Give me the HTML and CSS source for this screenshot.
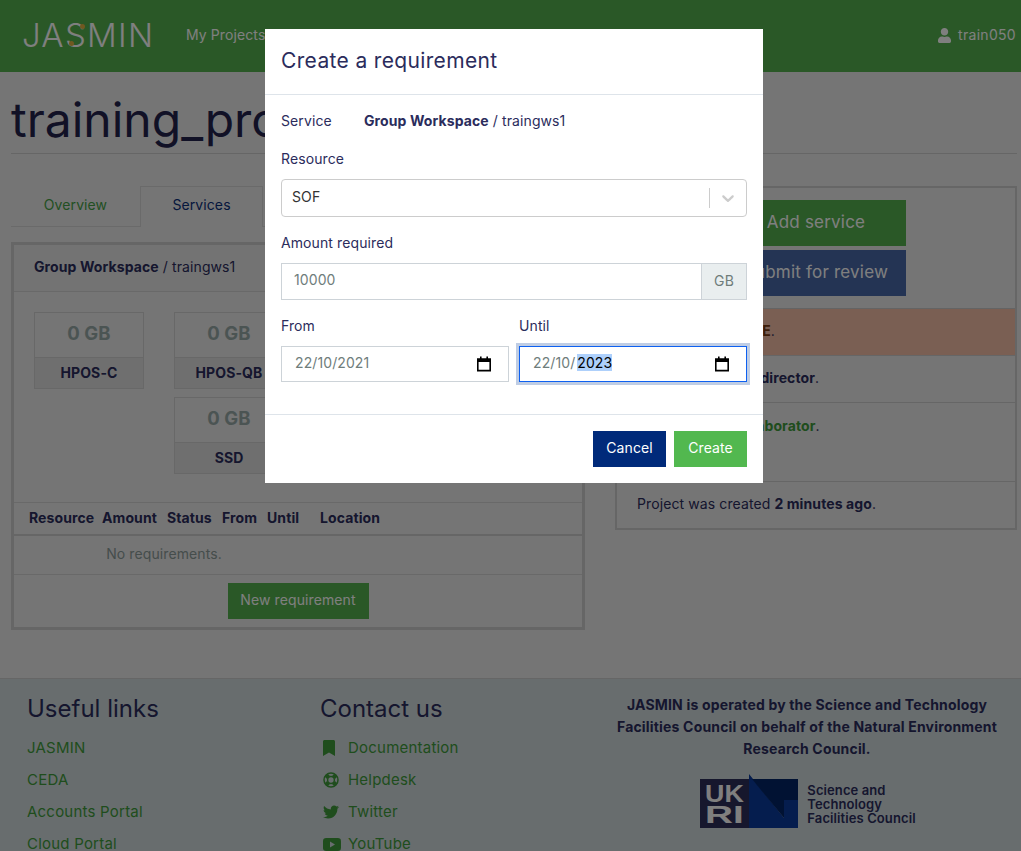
FILE: index.html
```html
<!DOCTYPE html>
<html lang="en">
<head>
<meta charset="utf-8">
<title>Create a requirement</title>
<link rel="stylesheet" href="styles.css">
</head>
<body>
<nav class="nav">
  <a class="logo">JASMIN<i class="dot dot-a"></i><i class="dot dot-b"></i></a>
  <a class="nav-link">My Projects</a>
  <a class="nav-user">
    <svg class="user-icon" viewBox="0 0 448 512"><path fill="currentColor" d="M224 256c70.7 0 128-57.3 128-128S294.7 0 224 0 96 57.3 96 128s57.3 128 128 128zm89.6 32h-16.7c-22.2 10.2-46.9 16-72.9 16s-50.6-5.8-72.9-16h-16.7C60.2 288 0 348.2 0 422.4V464c0 26.5 21.5 48 48 48h352c26.5 0 48-21.5 48-48v-41.6c0-74.2-60.2-134.4-134.4-134.4z"/></svg>
    train050
  </a>
</nav>
<main class="main">
  <h1 class="title">training_project</h1>
  <div class="columns">
    <section>
      <div class="tabs">
        <a class="tab">Overview</a>
        <a class="tab tab-active">Services</a>
      </div>
      <div class="card service">
        <div class="card-header"><b>Group Workspace</b> / traingws1</div>
        <div class="quotas">
          <div class="quota"><div class="quota-val">0 GB</div><div class="quota-name">HPOS-C</div></div>
          <div class="quota"><div class="quota-val">0 GB</div><div class="quota-name">HPOS-QB</div></div>
          <div class="quota quota-ssd"><div class="quota-val">0 GB</div><div class="quota-name">SSD</div></div>
        </div>
        <div class="req-head">
          <span>Resource</span><span>Amount</span><span>Status</span><span>From</span><span>Until</span><span>Location</span>
        </div>
        <div class="req-empty"><span>No requirements.</span></div>
        <div class="req-foot"><a class="btn btn-dim-green">New requirement</a></div>
      </div>
    </section>
    <aside class="card side">
      <div class="actions">
        <a class="action action-green">Add service</a>
        <a class="action action-blue">Submit for review</a>
      </div>
      <div class="status status-warn">Project is <b>EDITABLE</b>.</div>
      <div class="status">You're the project <b>director</b>.</div>
      <div class="status status-tall">train user is a <b class="green">collaborator</b>.</div>
      <div class="status">Project was created <b>2 minutes ago</b>.</div>
    </aside>
  </div>
</main>
<footer class="footer">
  <div class="foot-col">
    <h3 class="foot-title">Useful links</h3>
    <a class="foot-link">JASMIN</a>
    <a class="foot-link">CEDA</a>
    <a class="foot-link">Accounts Portal</a>
    <a class="foot-link">Cloud Portal</a>
  </div>
  <div class="foot-col">
    <h3 class="foot-title">Contact us</h3>
    <a class="foot-link"><span class="ico"><svg viewBox="0 0 384 512" width="12" height="16"><path fill="currentColor" d="M0 512V48C0 21.49 21.49 0 48 0h288c26.51 0 48 21.49 48 48v464L192 400 0 512z"/></svg></span>Documentation</a>
    <a class="foot-link"><span class="ico"><svg viewBox="0 0 16 16" width="16" height="16"><g fill="none" stroke="currentColor"><circle cx="8" cy="8" r="7" stroke-width="1.5"/><circle cx="8" cy="8" r="3.4" stroke-width="1.5"/><path stroke-width="4.2" d="M5.5 5.5L3 3M10.5 5.5L13 3M5.5 10.5L3 13M10.5 10.5L13 13"/></g></svg></span>Helpdesk</a>
    <a class="foot-link"><span class="ico"><svg viewBox="0 0 512 512" width="16" height="16"><path fill="currentColor" d="M459.37 151.716c.325 4.548.325 9.097.325 13.645 0 138.72-105.583 298.558-298.558 298.558-59.452 0-114.68-17.219-161.137-47.106 8.447.974 16.568 1.299 25.34 1.299 49.055 0 94.213-16.568 130.274-44.832-46.132-.975-84.792-31.188-98.112-72.772 6.498.974 12.995 1.624 19.818 1.624 9.421 0 18.843-1.3 27.614-3.573-48.081-9.747-84.143-51.98-84.143-102.985v-1.299c13.969 7.797 30.214 12.67 47.431 13.319-28.264-18.843-46.781-51.005-46.781-87.391 0-19.492 5.197-37.36 14.294-52.954 51.655 63.675 129.3 105.258 216.365 109.807-1.624-7.797-2.599-15.918-2.599-24.04 0-57.828 46.782-104.934 104.934-104.934 30.213 0 57.502 12.67 76.67 33.137 23.715-4.548 46.456-13.32 66.599-25.34-7.798 24.366-24.366 44.833-46.132 57.827 21.117-2.273 41.584-8.122 60.426-16.243-14.292 20.791-32.161 39.308-52.628 54.253z"/></svg></span>Twitter</a>
    <a class="foot-link"><span class="ico"><svg viewBox="0 0 18 13" width="18" height="13"><rect width="18" height="13" rx="3.2" fill="currentColor"/><path fill="#d0dadc" d="M7 3.6v5.8l5-2.9z"/></svg></span>YouTube</a>
  </div>
  <div class="foot-about">
    <p class="about-text">JASMIN is operated by the Science and Technology Facilities Council on behalf of the Natural Environment Research Council.</p>
    <div class="ukri">
      <svg class="ukri-mark" viewBox="0 0 98 54" width="98" height="54">
        <rect x="0" y="5" width="49" height="49" fill="#2d2f5a"/>
        <polygon points="49,0 84,44 84,26 98,26 98,54 49,54" fill="#0a3a9c"/>
        <polygon points="52,5 98,5 98,26 84,26 84,44" fill="#032566"/>
        <text class="ukri-letters" x="5" y="28" textLength="39" lengthAdjust="spacingAndGlyphs">UK</text>
        <text class="ukri-letters" x="5" y="49" textLength="39" lengthAdjust="spacingAndGlyphs">RI</text>
      </svg>
      <div class="ukri-name">Science and<br>Technology<br>Facilities Council</div>
    </div>
  </div>
</footer>

<div class="backdrop"></div>
<div class="modal">
  <div class="modal-head">Create a requirement</div>
  <div class="modal-body">
    <div class="service-row"><span class="service-label">Service</span><span><b>Group Workspace</b> / traingws1</span></div>
    <div class="field-label">Resource</div>
    <div class="select">
      <span class="select-val">SOF</span>
      <span class="select-sep"></span>
      <svg class="chev" viewBox="0 0 20 20"><path fill="currentColor" d="M4.516 7.548c0.436-0.446 1.043-0.481 1.576 0l3.908 3.747 3.908-3.747c0.533-0.481 1.141-0.446 1.574 0 0.436 0.445 0.408 1.197 0 1.615-0.406 0.418-4.695 4.502-4.695 4.502-0.217 0.223-0.502 0.335-0.787 0.335s-0.57-0.112-0.789-0.335c0 0-4.287-4.084-4.695-4.502s-0.436-1.17 0-1.615z"/></svg>
    </div>
    <div class="field-label amount-label">Amount required</div>
    <div class="input-group"><span class="input-val">10000</span><span class="addon">GB</span></div>
    <div class="dates">
      <div>
        <div class="field-label">From</div>
        <div class="date">
          <span>22/10/2021</span>
          <svg class="cal" viewBox="0 0 14 16"><path fill="none" stroke="#000" stroke-width="1.6" d="M.8 3.2h12.4v11.4H.8z"/><path fill="#000" d="M0 2.5h14v3.4H0zM3 .6h1.6v3H3zM9.4.6H11v3H9.4z"/></svg>
        </div>
      </div>
      <div>
        <div class="field-label">Until</div>
        <div class="date date-focus">
          <span>22/10/<span class="sel">2023</span></span>
          <svg class="cal" viewBox="0 0 14 16"><path fill="none" stroke="#000" stroke-width="1.6" d="M.8 3.2h12.4v11.4H.8z"/><path fill="#000" d="M0 2.5h14v3.4H0zM3 .6h1.6v3H3zM9.4.6H11v3H9.4z"/></svg>
        </div>
      </div>
    </div>
  </div>
  <div class="modal-foot">
    <a class="btn btn-navy">Cancel</a>
    <a class="btn btn-green">Create</a>
  </div>
</div>
</body>
</html>
```
FILE: styles.css
```css
* { box-sizing: border-box; }
html, body { margin: 0; height: 851px; overflow: hidden; }
body {
  background: #eaeaea;
  color: #2b2c5c;
  font-family: "Inter", "Noto Sans", sans-serif;
  font-size: 14px;
  letter-spacing: .1px;
  line-height: 20px;
}
b { font-weight: 700; }
.green { color: #3f9a3a; }

/* nav */
.nav { height: 72px; background: #55b04e; display: flex; align-items: center; padding: 0 5px 2px 22px; color: #fff; }
.logo { position: relative; font-size: 33px; font-weight: 300; letter-spacing: 1.3px; width: 164px; color: #fff; line-height: 40px; }
.dot { position: absolute; width: 5px; height: 5px; border-radius: 50%; background: #e0b040; }
.dot-a { left: 58px; top: 9px; }
.dot-b { left: 47px; top: 26px; }
.nav-link { color: #fff; }
.nav-user { margin-left: auto; display: flex; align-items: center; gap: 7px; color: #fff; letter-spacing: .3px; }
.user-icon { width: 13px; height: 15px; }

/* page */
.main { padding: 0 4px 0 11px; height: 606px; }
.title { margin: 0; padding: 24px 0 9px; font-size: 48px; line-height: 48px; font-weight: 400; letter-spacing: 0; color: #22234c; border-bottom: 1px solid #ccc; height: 82px; }
.columns { display: grid; grid-template-columns: 574px 402px; column-gap: 30px; padding-top: 32px; }
.tabs { display: flex; height: 41px; border-bottom: 1px solid #d5d5d5; margin-bottom: 15px; }
.tab { height: 41px; padding: 9px 0 0; text-align: center; }
.tab:first-child { width: 129px; color: #45a045; }
.tab-active { width: 123px; background: #eaeaea; border: 1px solid #d5d5d5; border-bottom: 0; padding-top: 8px; color: #0a2f7a; }

.card { border: 3px solid #ccc; }
.service { height: 388px; }
.card-header { height: 47px; padding: 12px 20px 0; border-bottom: 1px solid #d2d2d2; background: #e6e6e6; }
.quotas { display: grid; grid-template-columns: 110px 110px; align-content: start; column-gap: 30px; row-gap: 8px; padding: 20px 20px 0; height: 210px; }
.quota { border: 1px solid #d0d0d0; height: 77px; text-align: center; }
.quota-ssd { grid-column: 2; }
.quota-val { height: 45px; font-size: 18.5px; font-weight: 700; line-height: 41px; color: #97a9a6; border-bottom: 1px solid #d0d0d0; }
.quota-name { height: 30px; background: #dedede; font-weight: 700; line-height: 30px; color: #2b2c5c; }
.req-head { display: grid; grid-template-columns: 73px 65px 55px 45px 53px 100px; padding: 0 15px 2px; height: 34px; align-items: center; border-top: 1px solid #d2d2d2; border-bottom: 2px solid #ccc; font-weight: 700; }
.req-empty { height: 39px; width: 100%; border-bottom: 1px solid #d2d2d2; line-height: 35px; color: #8a9a98; }
.req-empty span { display: block; width: 300px; text-align: center; }
.req-foot { padding-top: 8px; text-align: center; }
.btn { display: inline-block; height: 36px; line-height: 34px; padding: 0 13px; color: #fff; }
.btn-dim-green { background: #55b04e; width: 141px; padding: 0; }

.side { height: 344px; padding-top: 12px; border-width: 2px; }
.actions { display: flex; flex-direction: column; align-items: flex-end; gap: 4px; padding: 0 109px 11px 0; height: 109px; border-bottom: 1px solid #c8c8c8; }
.action { width: 180px; height: 46px; font-size: 17px; letter-spacing: .2px; line-height: 45px; text-align: center; color: #fff; }
.action-green { background: #55b04e; }
.action-blue { background: #4868a8; }
.status { height: 47px; padding: 12px 20px 0; border-bottom: 1px solid #ccc; }
.status-warn { background: #f4bea6; }
.status-warn b { color: #7a3a10; }
.status-tall { height: 79px; padding-top: 13px; }
.status:last-child { border-bottom: 0; }

/* footer */
.footer { height: 173px; background: #d0dadc; border-top: 1px solid #ccc; display: grid; grid-template-columns: 293px 287px 400px; padding: 15px 0 0 27px; }
.foot-title { margin: 0 0 8px; font-size: 24px; line-height: 30px; font-weight: 400; letter-spacing: 0; color: #2b2c5c; }
.foot-link { display: flex; align-items: center; height: 32px; font-size: 15px; letter-spacing: .22px; color: #3f9a3a; }
.ico { width: 28px; display: flex; align-items: center; padding-left: 3px; }
.foot-about { text-align: center; }
.about-text { margin: 0 0 14px; font-weight: 700; letter-spacing: .18px; line-height: 22px; }
.ukri { display: flex; justify-content: center; gap: 9px; padding-left: 2px; }
.ukri-letters { font-family: "Liberation Sans", sans-serif; font-weight: 700; font-size: 24px; fill: #fff; }
.ukri-name { padding-top: 9px; font-size: 13px; line-height: 14px; font-weight: 600; text-align: left; }

/* modal */
.backdrop { position: fixed; inset: 0; background: rgba(0, 0, 0, .5); }
.modal { position: absolute; left: 265px; top: 29px; width: 498px; height: 454px; background: #fff; }
.modal-head { height: 66px; padding: 19px 16px 0; font-size: 21px; letter-spacing: .35px; line-height: 25px; border-bottom: 1px solid #dee4ea; }
.modal-body { height: 319px; padding: 16px 16px 0; }
.service-row { display: flex; height: 20px; }
.service-label { width: 83px; }
.field-label { height: 20px; line-height: 20px; }
.service-row + .field-label { margin-top: 18px; }
.select { display: flex; align-items: center; height: 38px; margin-top: 10px; border: 1px solid #ccc; border-radius: 4px; padding-left: 10px; color: #333; }
.select-val { flex: 1; padding-bottom: 2px; }
.select-sep { width: 1px; height: 20px; background: #ccc; }
.chev { width: 20px; height: 20px; margin: 0 8px; color: #ccc; }
.amount-label { margin-top: 16px; }
.input-group { display: flex; height: 37px; margin-top: 10px; border: 1px solid #cdd3d8; color: #6f7d7b; }
.input-val { flex: 1; padding: 6px 12px; }
.addon { width: 45px; background: #e9eeef; border-left: 1px solid #cdd3d8; text-align: center; line-height: 33px; }
.dates { display: grid; grid-template-columns: 228px 228px; column-gap: 10px; margin-top: 16px; }
.date { display: flex; align-items: center; justify-content: space-between; height: 36px; margin-top: 10px; padding: 0 17px 2px 13px; border: 1px solid #cdd3d8; color: #6f7d7b; }
.date-focus { border-color: #0d60f0; box-shadow: 0 0 0 3px #bfcde4; }
.sel { background: #aed0fb; color: #000; margin-left: 2px; }
.cal { width: 14px; height: 16px; margin-top: 2px; }
.modal-foot { display: flex; justify-content: flex-end; gap: 8px; padding: 16px; border-top: 1px solid #dee4ea; }
.btn-navy { background: #002a7a; width: 73px; padding: 0; text-align: center; }
.btn-green { background: #52b84f; width: 73px; padding: 0; text-align: center; }
```
